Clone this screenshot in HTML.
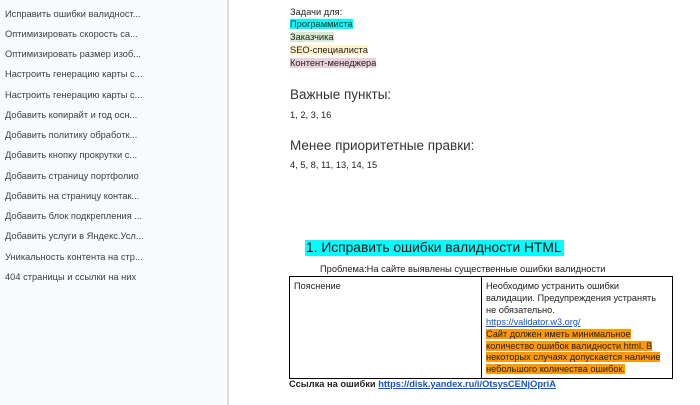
<!DOCTYPE html>
<html><head><meta charset="utf-8"><style>
body{margin:0;width:700px;height:405px;overflow:hidden;background:#fff;font-family:"Liberation Sans",Arial,sans-serif;color:#222;position:relative}
.side{position:absolute;left:0;top:0;width:227px;height:405px;background:#f8fafd;border-right:2px solid #dadce0}
.side div{position:absolute;left:5px;font-size:9.3px;color:#3c4043;white-space:nowrap}
.a{position:absolute;white-space:nowrap}
.s{font-size:9.3px}
.h{font-size:13.5px;color:#333}
table{position:absolute;left:289px;top:276px;width:384px;height:101px;border-collapse:collapse;font-size:9.2px}
td{border:1.5px solid #000;vertical-align:top;padding:4px 4px 2px 4px;line-height:11.9px;white-space:nowrap}
a{color:#1155cc;text-decoration:underline}
.or{background:#ff9900}
</style></head><body>
<div class="side">
<div style="top:9px">Исправить ошибки валидност...</div>
<div style="top:29px">Оптимизировать скорость са...</div>
<div style="top:49px">Оптимизировать размер изоб...</div>
<div style="top:69px">Настроить генерацию карты с...</div>
<div style="top:90px">Настроить генерацию карты с...</div>
<div style="top:110px">Добавить копирайт и год осн...</div>
<div style="top:130px">Добавить политику обработк...</div>
<div style="top:150px">Добавить кнопку прокрутки с...</div>
<div style="top:171px">Добавить страницу портфолио</div>
<div style="top:191px">Добавить на страницу контак...</div>
<div style="top:211px">Добавить блок подкрепления ...</div>
<div style="top:231px">Добавить услуги в Яндекс.Усл...</div>
<div style="top:252px">Уникальность контента на стр...</div>
<div style="top:272px">404 страницы и ссылки на них</div>
</div>
<div class="a s" style="left:290px;top:7px">Задачи для:</div>
<div class="a s" style="left:290px;top:19px;background:#00ffff">Программиста</div>
<div class="a s" style="left:290px;top:32px;background:#d9ead3">Заказчика</div>
<div class="a s" style="left:290px;top:45px;background:#fff2cc">SEO-специалиста</div>
<div class="a s" style="left:290px;top:58px;background:#ead1dc">Контент-менеджера</div>
<div class="a h" style="left:290px;top:87px">Важные пункты:</div>
<div class="a s" style="left:290px;top:110px">1, 2, 3, 16</div>
<div class="a h" style="left:290px;top:138px">Менее приоритетные правки:</div>
<div class="a s" style="left:290px;top:160px">4, 5, 8, 11, 13, 14, 15</div>
<div class="a" style="left:305px;top:240px;font-size:13.8px;background:#00ffff;padding:0 2px 1px 1px;color:#111">1. Исправить ошибки валидности HTML</div>
<div class="a s" style="left:320px;top:264px">Проблема:На сайте выявлены существенные ошибки валидности</div>
<table><tr><td style="width:183px">Пояснение</td><td>Необходимо устранить ошибки<br>валидации. Предупреждения устранять<br>не обязательно.<br><a>https://validator.w3.org/</a><br><span class="or">Сайт должен иметь минимальное<br>количество ошибок валидности html. В<br>некоторых случаях допускается наличие<br>небольшого количества ошибок.</span></td></tr></table>
<div class="a s" style="left:289px;top:379px;font-weight:bold">Ссылка на ошибки <a>https://disk.yandex.ru/i/OtsysCENjOpriA</a></div>
</body></html>
